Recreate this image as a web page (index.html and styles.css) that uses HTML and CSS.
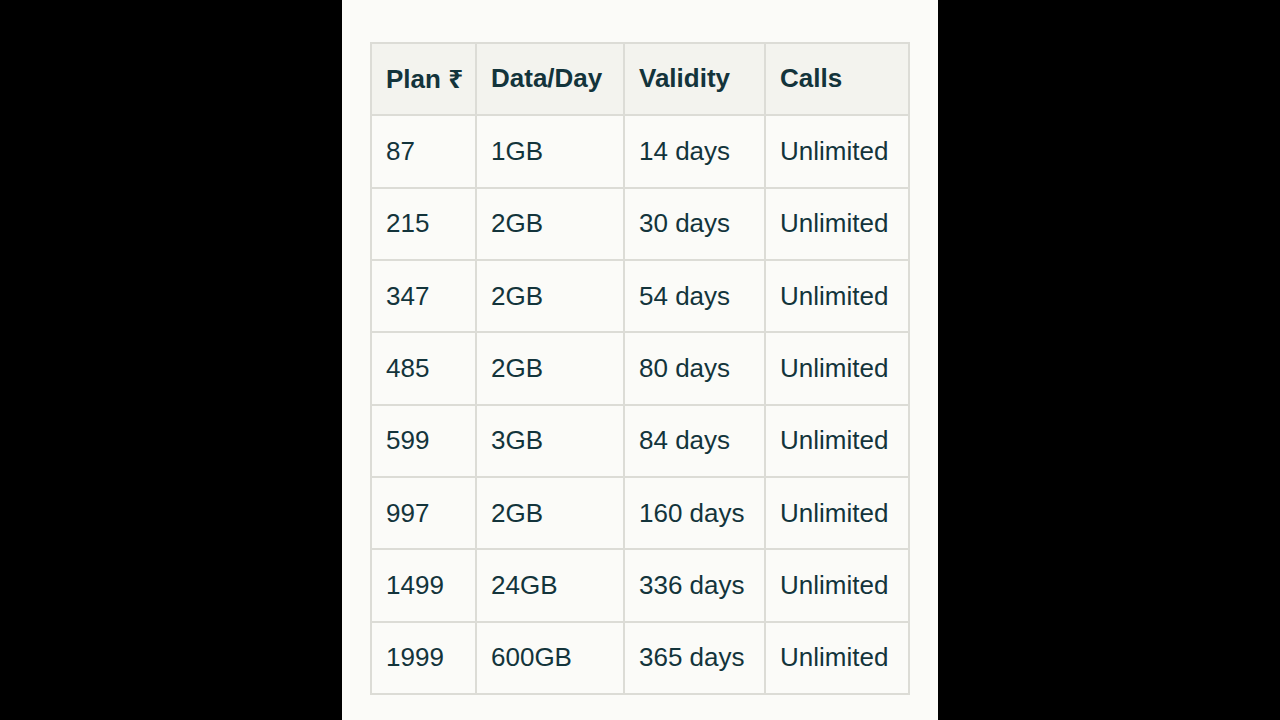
FILE: index.html
```html
<!DOCTYPE html>
<html>
<head>
<meta charset="utf-8">
<link rel="stylesheet" href="styles.css">
</head>
<body>
<div class="panel">
  <table class="plans">
    <colgroup>
      <col class="c1"><col class="c2"><col class="c3"><col class="c4">
    </colgroup>
    <thead>
      <tr><th>Plan ₹</th><th>Data/Day</th><th>Validity</th><th>Calls</th></tr>
    </thead>
    <tbody>
      <tr><td>87</td><td>1GB</td><td>14 days</td><td>Unlimited</td></tr>
      <tr><td>215</td><td>2GB</td><td>30 days</td><td>Unlimited</td></tr>
      <tr><td>347</td><td>2GB</td><td>54 days</td><td>Unlimited</td></tr>
      <tr><td>485</td><td>2GB</td><td>80 days</td><td>Unlimited</td></tr>
      <tr><td>599</td><td>3GB</td><td>84 days</td><td>Unlimited</td></tr>
      <tr><td>997</td><td>2GB</td><td>160 days</td><td>Unlimited</td></tr>
      <tr><td>1499</td><td>24GB</td><td>336 days</td><td>Unlimited</td></tr>
      <tr><td>1999</td><td>600GB</td><td>365 days</td><td>Unlimited</td></tr>
    </tbody>
  </table>
</div>
</body>
</html>
```
FILE: styles.css
```css
html, body {
  margin: 0;
  padding: 0;
  background: #000;
  height: 100%;
}
body {
  display: flex;
  justify-content: center;
  font-family: "Liberation Sans", "Noto Sans", Arial, sans-serif;
  color: #13343b;
}
.panel {
  width: 596px;
  height: 720px;
  background: #fbfbf8;
  padding: 42px 0 0 28px;
  box-sizing: border-box;
}
.plans {
  border-collapse: collapse;
  table-layout: fixed;
  width: 540px;
  font-size: 26px;
}
.c1 { width: 105px; }
.c2 { width: 148px; }
.c3 { width: 141px; }
.c4 { width: 144px; }
.plans th, .plans td {
  border: 2px solid #dcdcd6;
  height: 70.33px;
  padding: 0 0 0 14px;
  text-align: left;
  vertical-align: middle;
  white-space: nowrap;
}
.plans th {
  background: #f3f3ee;
  font-weight: 700;
  height: 68.33px;
  padding-bottom: 2px;
}
.plans td {
  font-weight: 400;
}
```
